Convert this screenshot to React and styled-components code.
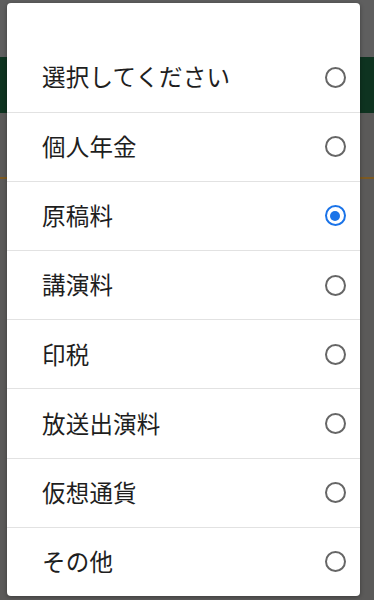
import React, { useState } from "react";
import styled, { createGlobalStyle } from "styled-components";

const Global = createGlobalStyle`
  html, body { margin: 0; padding: 0; }
  body {
    background: #5c5c5c;
    font-family: "Noto Sans CJK JP", "Noto Sans", Roboto, sans-serif;
    width: 374px;
    height: 600px;
    overflow: hidden;
  }
`;

const Page = styled.div`
  position: relative;
  width: 374px;
  height: 600px;
  background: #5b5a59;
  display: flex;
  flex-direction: column;
`;

const StatusArea = styled.div`
  height: 57px;
  background: #5f5f5f;
`;

const Header = styled.div`
  height: 56px;
  background: #0e3320;
`;

const Content = styled.div`
  flex: 1;
  padding-top: 64px;
`;

const AccentLine = styled.div`
  height: 2px;
  background: #7d5a22;
`;

const Dialog = styled.div`
  position: absolute;
  left: 7px;
  top: 3px;
  width: 352.5px;
  height: 593px;
  background: #ffffff;
  border-radius: 4px;
  box-shadow: 0 1px 4px rgba(0, 0, 0, 0.35);
  padding-top: 39.5px;
  box-sizing: border-box;
  display: flex;
  flex-direction: column;
  overflow: hidden;
`;

const Row = styled.label`
  height: 69.5px;
  box-sizing: border-box;
  display: flex;
  align-items: center;
  justify-content: space-between;
  padding: 0 14px 0 35px;
  border-top: ${(p) => (p.$first ? "none" : "1px solid #e2e2e2")};
  cursor: pointer;
`;

const Label = styled.span`
  font-size: 23.5px;
  color: #1e1e1e;
  letter-spacing: 0.2px;
  line-height: 1;
`;

const Radio = styled.span`
  width: 21px;
  height: 21px;
  box-sizing: border-box;
  border-radius: 50%;
  border: 2px solid ${(p) => (p.$checked ? "#1a73e8" : "#666666")};
  display: flex;
  align-items: center;
  justify-content: center;
  &::after {
    content: "";
    width: 10px;
    height: 10px;
    border-radius: 50%;
    background: #1a73e8;
    display: ${(p) => (p.$checked ? "block" : "none")};
  }
`;

const OPTIONS = [
  "選択してください",
  "個人年金",
  "原稿料",
  "講演料",
  "印税",
  "放送出演料",
  "仮想通貨",
  "その他",
];

export default function App() {
  const [selected, setSelected] = useState(2);
  return (
    <>
      <Global />
      <Page>
        <StatusArea />
        <Header />
        <Content>
          <AccentLine />
        </Content>
        <Dialog>
          {OPTIONS.map((o, i) => (
            <Row key={o} $first={i === 0} onClick={() => setSelected(i)}>
              <Label>{o}</Label>
              <Radio $checked={i === selected} />
            </Row>
          ))}
        </Dialog>
      </Page>
    </>
  );
}
